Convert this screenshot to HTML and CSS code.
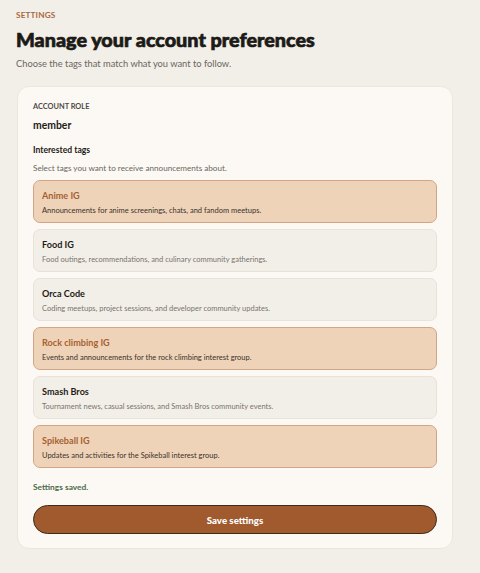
FILE: index.html
```html
<!DOCTYPE html>
<html lang="en">
<head>
<meta charset="utf-8">
<title>Settings</title>
<link rel="stylesheet" href="styles.css">
</head>
<body>
<main class="page">
  <p class="eyebrow">SETTINGS</p>
  <h1 class="title">Manage your account preferences</h1>
  <p class="subtitle">Choose the tags that match what you want to follow.</p>

  <section class="card">
    <p class="role-label">ACCOUNT ROLE</p>
    <p class="role-value">member</p>

    <h2 class="tags-heading">Interested tags</h2>
    <p class="tags-help">Select tags you want to receive announcements about.</p>

    <ul class="tag-list">
      <li class="tag tag-selected">
        <span class="tag-name">Anime IG</span>
        <span class="tag-desc">Announcements for anime screenings, chats, and fandom meetups.</span>
      </li>
      <li class="tag">
        <span class="tag-name">Food IG</span>
        <span class="tag-desc">Food outings, recommendations, and culinary community gatherings.</span>
      </li>
      <li class="tag">
        <span class="tag-name">Orca Code</span>
        <span class="tag-desc">Coding meetups, project sessions, and developer community updates.</span>
      </li>
      <li class="tag tag-selected">
        <span class="tag-name">Rock climbing IG</span>
        <span class="tag-desc">Events and announcements for the rock climbing interest group.</span>
      </li>
      <li class="tag">
        <span class="tag-name">Smash Bros</span>
        <span class="tag-desc">Tournament news, casual sessions, and Smash Bros community events.</span>
      </li>
      <li class="tag tag-selected">
        <span class="tag-name">Spikeball IG</span>
        <span class="tag-desc">Updates and activities for the Spikeball interest group.</span>
      </li>
    </ul>

    <p class="status">Settings saved.</p>
    <button class="save" type="button">Save settings</button>
  </section>
</main>
</body>
</html>
```
FILE: styles.css
```css
* { box-sizing: border-box; }
html, body {
  margin: 0;
  padding: 0;
  background: #f2efe8;
}
body {
  font-family: "Lato", "Open Sans", sans-serif;
  color: #1f1b17;
}
.page {
  padding: 10px 16px 20px 16px;
  width: 480px;
}
.eyebrow {
  margin: 0;
  font-size: 8.2px;
  font-weight: 700;
  letter-spacing: 0.15px;
  color: #a9683f;
  line-height: 11px;
}
.title {
  margin: 6px 0 0 0;
  font-size: 19.8px;
  font-weight: 900;
  line-height: 24px;
  color: #1c1a17;
  -webkit-text-stroke: 0.7px #1c1a17;
}
.subtitle {
  margin: 6px 0 0 0;
  font-size: 9.3px;
  line-height: 14px;
  color: #6b6560;
}
.card {
  width: 436px;
  margin-top: 15px;
  margin-left: 1px;
  background: #fcf9f5;
  border: 1px solid #ece6dc;
  border-radius: 12px;
  padding: 14px 15px 14px 15px;
}
.role-label {
  margin: 0;
  font-size: 7.4px;
  font-weight: 700;
  color: #4f4a45;
  line-height: 11px;
}
.role-value {
  margin: 6px 0 0 0;
  font-size: 10.4px;
  font-weight: 700;
  line-height: 14px;
  color: #1f1b17;
}
.tags-heading {
  margin: 12px 0 0 0;
  font-size: 8.6px;
  font-weight: 700;
  line-height: 12px;
  color: #1f1b17;
}
.tags-help {
  margin: 6px 0 0 0;
  font-size: 8.15px;
  line-height: 12px;
  color: #6b6560;
}
.tag-list {
  list-style: none;
  margin: 6px 0 0 0;
  padding: 0;
  display: flex;
  flex-direction: column;
  gap: 6px;
}
.tag {
  height: 43px;
  border-radius: 7px;
  border: 1px solid #e8e2d7;
  background: #f2efe8;
  padding: 8px 8px 0 8px;
  display: flex;
  flex-direction: column;
  gap: 3px;
}
.tag-selected {
  background: #efd3b8;
  border-color: #d3a584;
}
.tag-name {
  font-size: 9.1px;
  font-weight: 700;
  line-height: 13px;
  color: #1f1b17;
}
.tag-selected .tag-name {
  color: #a65f32;
}
.tag-desc {
  font-size: 7.5px;
  line-height: 11px;
  color: #7a746d;
}
.tag-selected .tag-desc {
  color: #3a322b;
}
.status {
  margin: 13px 0 0 0;
  font-size: 8.4px;
  font-weight: 700;
  line-height: 12px;
  color: #4a6b47;
}
.save {
  display: block;
  width: 100%;
  height: 29px;
  margin-top: 12px;
  border-radius: 999px;
  border: 1.5px solid #3b2a1f;
  background: #a15a2d;
  color: #ffffff;
  font-family: "Lato", "Open Sans", sans-serif;
  font-size: 9.7px;
  font-weight: 900;
  cursor: pointer;
}
```
